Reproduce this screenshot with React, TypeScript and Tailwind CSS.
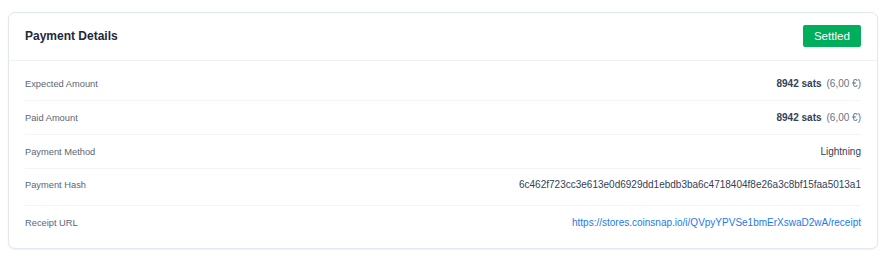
const rows = [
  { label: "Expected Amount", kind: "amount", pad: "pt-[12px] pb-[11px]" },
  { label: "Paid Amount", kind: "amount", pad: "pt-[12px] pb-[11px]" },
  { label: "Payment Method", kind: "text", value: "Lightning", pad: "pt-[12px] pb-[11px]" },
  {
    label: "Payment Hash",
    kind: "text",
    value: "6c462f723cc3e613e0d6929dd1ebdb3ba6c4718404f8e26a3c8bf15faa5013a1",
    pad: "pt-[11px] pb-[15px]",
  },
  {
    label: "Receipt URL",
    kind: "link",
    value: "https://stores.coinsnap.io/i/QVpyYPVSe1bmErXswaD2wA/receipt",
    pad: "pt-[12px] pb-[12px]",
  },
];

const App = () => {
  return (
    <div
      className="w-[892px] h-[261px] bg-white pl-2 pt-3"
      style={{ fontFamily: '"Liberation Sans", Arial, sans-serif' }}
    >
      <div className="w-[870px] rounded-[7px] border border-[#e2e8f0] bg-white shadow-[0_1px_2px_rgba(15,23,42,0.06)]">
        {/* == Header == */}
        <div className="flex items-center justify-between h-[48px] px-4 pb-[2px] border-b border-[#eef2f6]">
          <h2 className="text-[12px] leading-none font-bold text-[#1e293b]">Payment Details</h2>
          <span className="flex items-center h-[22px] px-[11px] rounded-[2px] bg-[#00ae5b] text-white text-[11.6px] leading-none">
            Settled
          </span>
        </div>

        {/* == Rows == */}
        <div className="px-4 pt-[6px] pb-[8px]">
          {rows.map((row, i) => (
            <div
              key={row.label}
              className={`flex items-center justify-between ${row.pad} ${
                i < rows.length - 1 ? "border-b border-[#f1f4f8]" : ""
              }`}
            >
              <span className="text-[9.3px] leading-[10px] text-[#5b6577]">{row.label}</span>
              {row.kind === "amount" && (
                <span className="text-[10px] leading-[10px]">
                  <span className="font-bold text-[#334155]">8942 sats</span>
                  <span className="ml-[5px] text-[#64748b]">(6,00 €)</span>
                </span>
              )}
              {row.kind === "text" && (
                <span className="text-[10px] leading-[10px] text-[#334155]">{row.value}</span>
              )}
              {row.kind === "link" && (
                <a className="text-[10px] leading-[10px] text-[#2479e8]" href="#">
                  {row.value}
                </a>
              )}
            </div>
          ))}
        </div>
      </div>
    </div>
  );
};

export default App;
